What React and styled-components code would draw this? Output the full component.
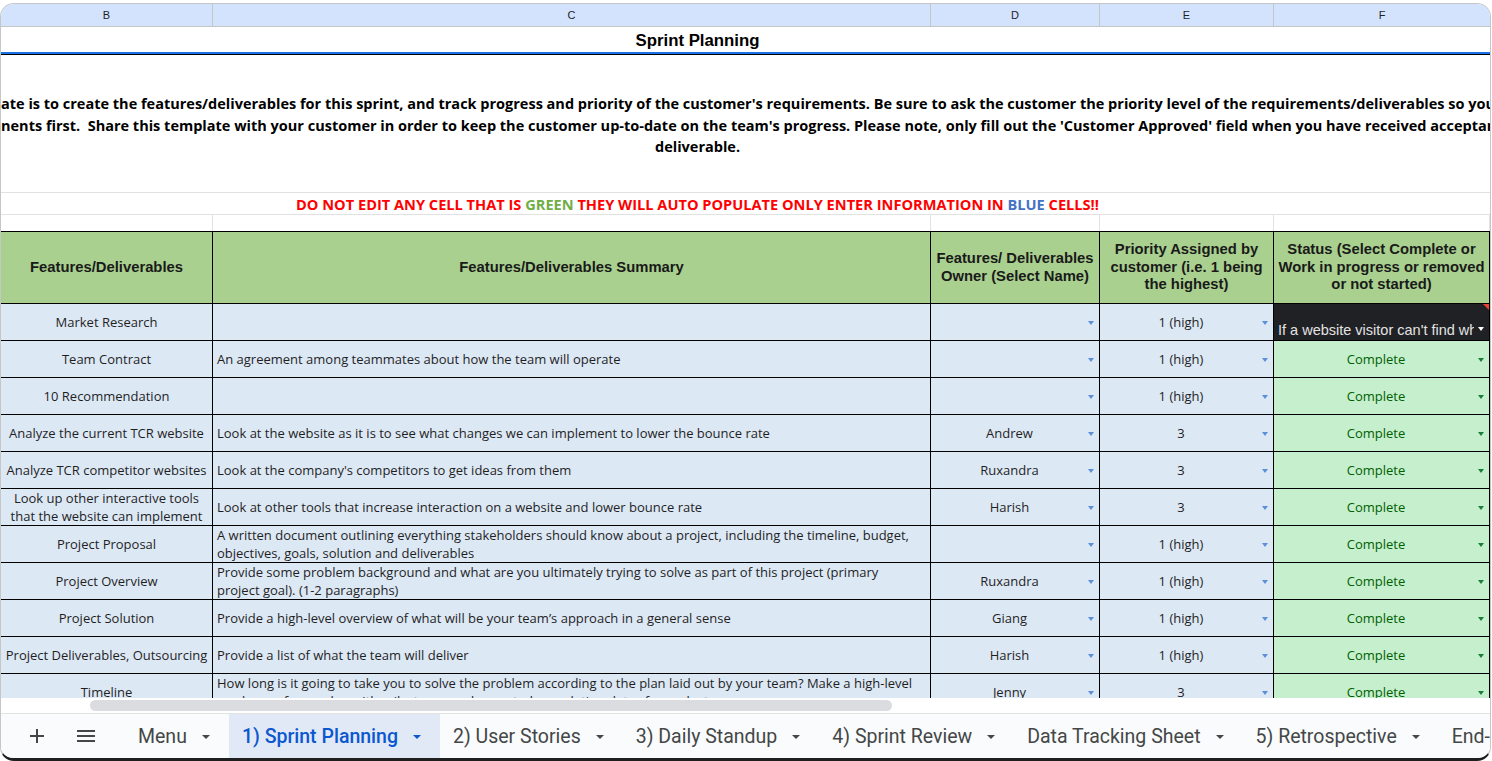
import React from 'react';
import styled, { createGlobalStyle } from 'styled-components';

const GlobalStyle = createGlobalStyle`
    html, body {
        margin: 0;
        padding: 0;
        background: #ffffff;
    }
    body {
        width: 1492px;
        height: 761px;
        overflow: hidden;
        font-family: "Liberation Sans", Arial, sans-serif;
    }
`;

const COLS = '212px 718px 169px 174px 216px';

const Frame = styled.div`
    margin-top: 3px;
    width: 1491px;
    height: 758px;
    box-sizing: border-box;
    border: 1px solid #c4c7c5;
    border-bottom: 3px solid #1f1f1f;
    border-radius: 14px;
    overflow: hidden;
    display: flex;
    flex-direction: column;
    background: #ffffff;
`;

const Sheet = styled.div`
    flex: 1;
    overflow: hidden;
    display: flex;
    flex-direction: column;
`;

const ColHeaders = styled.div`
    display: grid;
    grid-template-columns: ${COLS};
    height: 22px;
    background: #d3e3fd;
    border-bottom: 1px solid #c4c7c5;
    flex-shrink: 0;
`;

const ColLetter = styled.div`
    display: flex;
    align-items: center;
    justify-content: center;
    font-size: 11px;
    color: #1f1f1f;
    border-right: 1px solid #c4c7c5;
    &:last-child { border-right: none; }
`;

const TitleRow = styled.div`
    height: 25px;
    display: flex;
    align-items: center;
    justify-content: center;
    padding-right: 96px;
    padding-top: 2px;
    box-sizing: border-box;
    font-weight: bold;
    font-size: 16.8px;
    color: #000;
    flex-shrink: 0;
`;

const FreezeLine = styled.div`
    height: 0;
    border-top: 2px solid #1a73e8;
    border-bottom: 1px solid #000;
    flex-shrink: 0;
`;

const DescRow = styled.div`
    height: 138px;
    box-sizing: border-box;
    padding-top: 38px;
    border-bottom: 1px solid #e2e2e2;
    font-family: "Open Sans", sans-serif;
    font-weight: bold;
    font-size: 14.5px;
    line-height: 21.5px;
    color: #000;
    overflow: hidden;
    flex-shrink: 0;
`;

const DescLine = styled.div`
    white-space: nowrap;
    overflow: hidden;
    text-align: ${p => (p.$center ? 'center' : 'left')};
    padding-right: ${p => (p.$center ? '96px' : '0')};
`;

const WarnRow = styled.div`
    height: 21px;
    border-bottom: 1px solid #e2e2e2;
    display: flex;
    align-items: center;
    justify-content: center;
    padding-right: 96px;
    font-family: "Open Sans", sans-serif;
    font-weight: bold;
    font-size: 14.6px;
    color: #ff0000;
    white-space: nowrap;
    flex-shrink: 0;
`;

const Tint = styled.span`
    color: ${p => p.$color};
`;

const GridRow = styled.div`
    display: grid;
    grid-template-columns: ${COLS};
    flex-shrink: 0;
`;

const BlankCell = styled.div`
    height: 16px;
    border-right: 1px solid #e2e2e2;
`;

const HeadRow = styled(GridRow)`
    border-top: 1px solid #000;
`;

const HeadCell = styled.div`
    height: 71px;
    background: #a9d08e;
    border-right: 1px solid #000;
    border-bottom: 1px solid #000;
    display: flex;
    align-items: center;
    justify-content: center;
    text-align: center;
    font-weight: bold;
    font-size: 14.8px;
    line-height: 17.5px;
    color: #1a1a1a;
    padding: 0 2px;
`;

const Cell = styled.div`
    height: 37px;
    box-sizing: border-box;
    background: ${p => (p.$status ? '#c6efce' : '#dde8f5')};
    border-right: 1px solid #000;
    border-bottom: 1px solid #000;
    display: flex;
    align-items: center;
    padding: 0 4px;
    font-family: "Open Sans", sans-serif;
    font-size: 13px;
    line-height: 18px;
    color: ${p => (p.$status ? '#006100' : '#1f1f1f')};
    overflow: hidden;
`;

const SummaryCell = styled(Cell)`
    padding: 0 12px 0 4px;
`;

const NameCell = styled(Cell)`
    justify-content: center;
    text-align: center;
    padding: 0 3px;
`;

const PickCell = styled(Cell)`
    padding: 0 5px 0 0;
`;

const PickText = styled.span`
    flex: 1;
    text-align: center;
    white-space: nowrap;
`;

const Caret = styled.span`
    width: 0;
    height: 0;
    border-left: 3.5px solid transparent;
    border-right: 3.5px solid transparent;
    border-top: 4px solid ${p => p.$color};
    margin-top: 1px;
    flex-shrink: 0;
`;

const DarkCell = styled.div`
    position: relative;
    height: 37px;
    box-sizing: border-box;
    background: #202124;
    border-right: 1px solid #000;
    border-bottom: 1px solid #000;
    display: flex;
    align-items: flex-end;
    padding: 0 5px 0 4px;
    font-size: 14.5px;
    color: #e3e3e3;
    overflow: hidden;
`;

const DarkText = styled.span`
    flex: 1;
    white-space: nowrap;
    overflow: hidden;
    line-height: 20px;
`;

const DarkCaret = styled(Caret)`
    align-self: center;
    margin-top: 14px;
    margin-left: 4px;
`;

const CommentFlag = styled.span`
    position: absolute;
    top: 0;
    right: 0;
    width: 0;
    height: 0;
    border-top: 6px solid #ea4335;
    border-left: 6px solid transparent;
`;

const ScrollStrip = styled.div`
    height: 13px;
    border-bottom: 1px solid #e1e3e1;
    padding: 2px 0 0 89px;
    flex-shrink: 0;
    background: #ffffff;
`;

const Thumb = styled.div`
    width: 802px;
    height: 11px;
    border-radius: 6px;
    background: #dadce0;
`;

const TabBar = styled.div`
    height: 44px;
    background: #f9fbfd;
    display: flex;
    align-items: stretch;
    padding-left: 16px;
    flex-shrink: 0;
    white-space: nowrap;
    font-family: Roboto, "Noto Sans", sans-serif;
    font-size: 19.5px;
    color: #444746;
`;

const IconButton = styled.div`
    flex-shrink: 0;
    width: ${p => p.$w}px;
    display: flex;
    align-items: center;
    justify-content: center;
    margin-right: ${p => p.$mr || 0}px;
`;

const Tab = styled.div`
    flex-shrink: 0;
    display: flex;
    align-items: center;
    gap: 15px;
    padding: 0 19px 0 13px;
    background: ${p => (p.$active ? '#e1e9f7' : 'transparent')};
    color: ${p => (p.$active ? '#0b57d0' : '#444746')};
    font-weight: ${p => (p.$active ? 500 : 400)};
`;

const TabCaret = styled.span`
    width: 0;
    height: 0;
    border-left: 4px solid transparent;
    border-right: 4px solid transparent;
    border-top: 4.5px solid currentColor;
    margin-top: 1px;
`;

const BLUE = '#5b8fd9';
const GREEN = '#188038';

const rows = [
    { name: 'Market Research', summary: '', owner: '', priority: '1 (high)', dark: true },
    { name: 'Team Contract', summary: 'An agreement among teammates about how the team will operate', owner: '', priority: '1 (high)' },
    { name: '10 Recommendation', summary: '', owner: '', priority: '1 (high)' },
    { name: 'Analyze the current TCR website', summary: 'Look at the website as it is to see what changes we can implement to lower the bounce rate', owner: 'Andrew', priority: '3' },
    { name: 'Analyze TCR competitor websites', summary: "Look at the company's competitors to get ideas from them", owner: 'Ruxandra', priority: '3' },
    { name: 'Look up other interactive tools that the website can implement', summary: 'Look at other tools that increase interaction on a website and lower bounce rate', owner: 'Harish', priority: '3' },
    { name: 'Project Proposal', summary: 'A written document outlining everything stakeholders should know about a project, including the timeline, budget, objectives, goals, solution and deliverables', owner: '', priority: '1 (high)' },
    { name: 'Project Overview', summary: 'Provide some problem background and what are you ultimately trying to solve as part of this project (primary project goal). (1-2 paragraphs)', owner: 'Ruxandra', priority: '1 (high)' },
    { name: 'Project Solution', summary: "Provide a high-level overview of what will be your team’s approach in a general sense", owner: 'Giang', priority: '1 (high)' },
    { name: 'Project Deliverables, Outsourcing', summary: 'Provide a list of what the team will deliver', owner: 'Harish', priority: '1 (high)' },
    { name: 'Timeline', summary: 'How long is it going to take you to solve the problem according to the plan laid out by your team? Make a high-level roadmap of your plan with milestones and expected completion dates for each step.', owner: 'Jenny', priority: '3' },
];

const tabs = ['Menu', '1) Sprint Planning', '2) User Stories', '3) Daily Standup', '4) Sprint Review', 'Data Tracking Sheet', '5) Retrospective', 'End-of-Sprint Summary'];

const App = () => {
    return (
        <>
            <GlobalStyle />
            <Frame>
                <Sheet>
                    <ColHeaders>
                        {['B', 'C', 'D', 'E', 'F'].map(l => <ColLetter key={l}>{l}</ColLetter>)}
                    </ColHeaders>
                    <TitleRow>Sprint Planning</TitleRow>
                    <FreezeLine />
                    <DescRow>
                        <DescLine>ate is to create the features/deliverables for this sprint, and track progress and priority of the customer's requirements. Be sure to ask the customer the priority level of the requirements/deliverables so your team can work on the most important components</DescLine>
                        <DescLine>nents first.&nbsp; Share this template with your customer in order to keep the customer up-to-date on the team's progress. Please note, only fill out the 'Customer Approved' field when you have received acceptance of the</DescLine>
                        <DescLine $center>deliverable.</DescLine>
                    </DescRow>
                    <WarnRow>
                        DO NOT EDIT ANY CELL THAT IS&nbsp;<Tint $color="#70ad47">GREEN</Tint>&nbsp;THEY WILL AUTO POPULATE ONLY ENTER INFORMATION IN&nbsp;<Tint $color="#4472c4">BLUE</Tint>&nbsp;CELLS!!
                    </WarnRow>
                    <GridRow>
                        {[0, 1, 2, 3, 4].map(i => <BlankCell key={i} />)}
                    </GridRow>
                    <HeadRow>
                        <HeadCell>Features/Deliverables</HeadCell>
                        <HeadCell>Features/Deliverables Summary</HeadCell>
                        <HeadCell>Features/ Deliverables Owner (Select Name)</HeadCell>
                        <HeadCell>Priority Assigned by customer (i.e. 1 being the highest)</HeadCell>
                        <HeadCell>Status (Select Complete or Work in progress or removed or not started)</HeadCell>
                    </HeadRow>
                    {rows.map(r => (
                        <GridRow key={r.name}>
                            <NameCell>{r.name}</NameCell>
                            <SummaryCell>{r.summary}</SummaryCell>
                            <PickCell>
                                <PickText>{r.owner}</PickText>
                                <Caret $color={BLUE} />
                            </PickCell>
                            <PickCell>
                                <PickText>{r.priority}</PickText>
                                <Caret $color={BLUE} />
                            </PickCell>
                            {r.dark ? (
                                <DarkCell>
                                    <DarkText>If a website visitor can't find what they are looking for</DarkText>
                                    <DarkCaret $color="#ffffff" />
                                    <CommentFlag />
                                </DarkCell>
                            ) : (
                                <PickCell $status>
                                    <PickText>Complete</PickText>
                                    <Caret $color={GREEN} />
                                </PickCell>
                            )}
                        </GridRow>
                    ))}
                </Sheet>
                <ScrollStrip>
                    <Thumb />
                </ScrollStrip>
                <TabBar>
                    <IconButton $w={40} $mr={9}>
                        <svg width="14" height="14" viewBox="0 0 14 14">
                            <path d="M7 0v14M0 7h14" stroke="#444746" strokeWidth="2" />
                        </svg>
                    </IconButton>
                    <IconButton $w={40} $mr={19}>
                        <svg width="18" height="14" viewBox="0 0 18 14">
                            <path d="M0 2h18M0 7h18M0 12h18" stroke="#444746" strokeWidth="2" />
                        </svg>
                    </IconButton>
                    {tabs.map((t, i) => (
                        <Tab key={t} $active={i === 1}>
                            {t}
                            <TabCaret />
                        </Tab>
                    ))}
                </TabBar>
            </Frame>
        </>
    );
};

export default App;
